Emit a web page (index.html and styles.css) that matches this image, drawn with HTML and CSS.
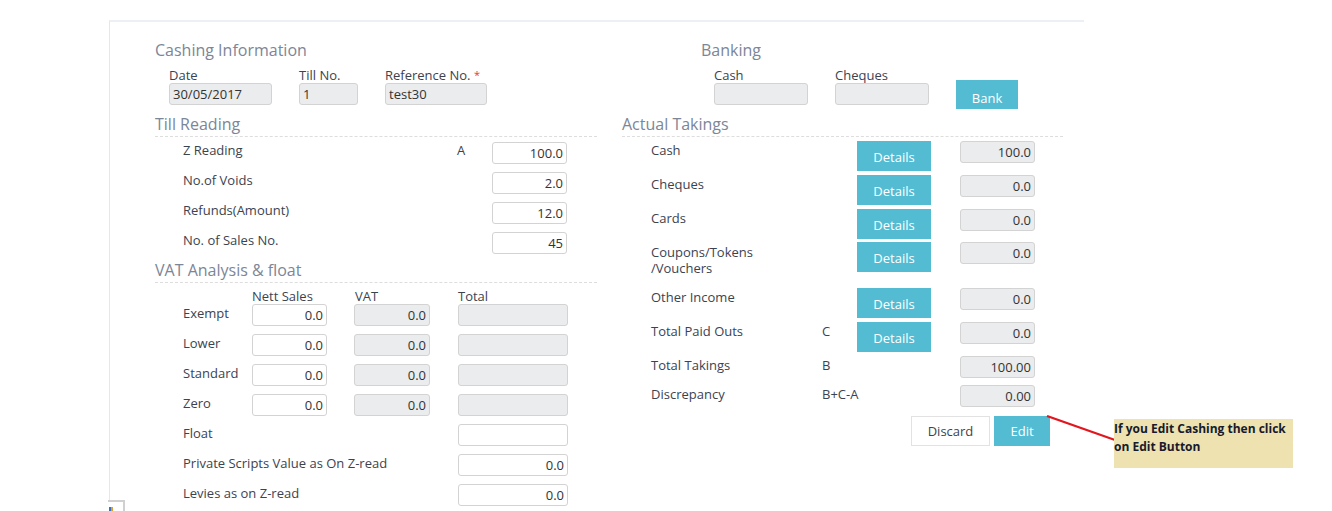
FILE: index.html
```html
<!DOCTYPE html>
<html>
<head>
<meta charset="utf-8">
<link rel="stylesheet" href="styles.css">
</head>
<body>
<div class="panel">
  <div class="cols">
    <section class="col col-left">
      <h3 class="heading">Cashing Information</h3>
      <div class="fields fields-cash">
        <div class="field w-date"><span class="lbl">Date</span><div class="inp ro">30/05/2017</div></div>
        <div class="field w-till"><span class="lbl">Till No.</span><div class="inp ro">1</div></div>
        <div class="field w-ref"><span class="lbl">Reference No. <span class="req">*</span></span><div class="inp ro">test30</div></div>
      </div>

      <h3 class="heading dashed">Till Reading</h3>
      <div class="till-rows">
        <div class="till-row"><span class="lbl">Z Reading</span><span class="lbl">A</span><div class="inp num">100.0</div></div>
        <div class="till-row"><span class="lbl">No.of Voids</span><span></span><div class="inp num">2.0</div></div>
        <div class="till-row"><span class="lbl">Refunds(Amount)</span><span></span><div class="inp num">12.0</div></div>
        <div class="till-row"><span class="lbl">No. of Sales No.</span><span></span><div class="inp num">45</div></div>
      </div>

      <h3 class="heading dashed vat-heading">VAT Analysis &amp; float</h3>
      <div class="vat-head">
        <span></span><span class="lbl">Nett Sales</span><span class="lbl vat-h">VAT</span><span class="lbl">Total</span>
      </div>
      <div class="vat-grid">
        <span class="lbl">Exempt</span><div class="inp num w-nett">0.0</div><div class="inp num ro w-vat">0.0</div><div class="inp ro w-total"></div>
        <span class="lbl">Lower</span><div class="inp num w-nett">0.0</div><div class="inp num ro w-vat">0.0</div><div class="inp ro w-total"></div>
        <span class="lbl">Standard</span><div class="inp num w-nett">0.0</div><div class="inp num ro w-vat">0.0</div><div class="inp ro w-total"></div>
        <span class="lbl">Zero</span><div class="inp num w-nett">0.0</div><div class="inp num ro w-vat">0.0</div><div class="inp ro w-total"></div>

        <span class="lbl span3">Float</span><div class="inp w-total"></div>
        <span class="lbl span3">Private Scripts Value as On Z-read</span><div class="inp num w-total">0.0</div>
        <span class="lbl span3">Levies as on Z-read</span><div class="inp num w-total">0.0</div>
      </div>
    </section>

    <section class="col col-right">
      <div class="banking">
        <h3 class="heading">Banking</h3>
        <div class="fields fields-bank">
          <div class="field w-bank"><span class="lbl">Cash</span><div class="inp ro"></div></div>
          <div class="field w-bank"><span class="lbl">Cheques</span><div class="inp ro"></div></div>
          <button class="btn btn-bank">Bank</button>
        </div>
      </div>

      <h3 class="heading dashed">Actual Takings</h3>
      <div class="take-rows">
        <div class="take-row"><span class="lbl">Cash</span><span></span><button class="btn btn-det">Details</button><div class="inp num ro">100.0</div></div>
        <div class="take-row"><span class="lbl">Cheques</span><span></span><button class="btn btn-det">Details</button><div class="inp num ro">0.0</div></div>
        <div class="take-row short"><span class="lbl">Cards</span><span></span><button class="btn btn-det">Details</button><div class="inp num ro">0.0</div></div>
        <div class="take-row tall"><span class="lbl">Coupons/Tokens<br>/Vouchers</span><span></span><button class="btn btn-det">Details</button><div class="inp num ro">0.0</div></div>
        <div class="take-row"><span class="lbl">Other Income</span><span></span><button class="btn btn-det">Details</button><div class="inp num ro">0.0</div></div>
        <div class="take-row"><span class="lbl">Total Paid Outs</span><span class="lbl">C</span><button class="btn btn-det">Details</button><div class="inp num ro">0.0</div></div>
        <div class="take-row plain"><span class="lbl">Total Takings</span><span class="lbl">B</span><span></span><div class="inp num ro">100.00</div></div>
        <div class="take-row plain"><span class="lbl">Discrepancy</span><span class="lbl">B+C-A</span><span></span><div class="inp num ro">0.00</div></div>
      </div>
      <div class="actions">
        <button class="btn btn-discard">Discard</button>
        <button class="btn btn-edit">Edit</button>
      </div>
    </section>
  </div>
</div>

<svg class="callout-line" width="80" height="30" viewBox="0 0 80 30">
  <line x1="2" y1="1" x2="70" y2="25" stroke="#e3161e" stroke-width="2.2"/>
</svg>
<div class="note">If you Edit Cashing then click on Edit Button</div>
<div class="corner"><span class="corner-icon"></span></div>
</body>
</html>
```

FILE: styles.css
```css
* { box-sizing: border-box; }
html, body { margin: 0; padding: 0; background: #fff; }
body {
  font-family: "Open Sans", "Noto Sans", sans-serif;
  font-size: 13px;
  color: #3b4350;
  width: 1332px;
  height: 511px;
  overflow: hidden;
  position: relative;
}
.panel {
  margin: 20px 0 0 109px;
  width: 975px;
  height: 481px;
  border-top: 2px solid #eceff3;
  border-left: 1px solid #e4e7eb;
  padding: 18px 0 0 45px;
}
.cols {
  display: grid;
  grid-template-columns: 442px 441px;
  column-gap: 25px;
  align-items: start;
}
.heading {
  margin: 0;
  font-weight: 400;
  font-size: 16px;
  line-height: 20px;
  color: #7b8698;
}
.heading.dashed {
  margin-top: 9px;
  padding-bottom: 2px;
  border-bottom: 1px dashed #dddddd;
}
.lbl { line-height: 16px; white-space: nowrap; }
.req { color: #e23b3b; font-size: 11px; vertical-align: top; }

.fields { display: flex; margin-top: 7px; column-gap: 27px; height: 38px; }
.fields-cash { padding-left: 14px; }
.field { display: flex; flex-direction: column; }
.w-date { width: 103px; }
.w-till { width: 59px; }
.w-ref { width: 102px; }
.w-bank { width: 94px; }

.inp {
  height: 22px;
  border: 1px solid #d3d3d3;
  border-radius: 3px;
  background: #fff;
  padding: 0 3px;
  line-height: 20px;
  color: #333;
  white-space: nowrap;
  overflow: hidden;
}
.inp.ro { background: #ebeced; }
.inp.num { text-align: right; }

.till-rows {
  margin-top: 5px;
  padding-left: 28px;
  display: flex;
  flex-direction: column;
  row-gap: 8px;
}
.till-row {
  display: grid;
  grid-template-columns: 274px 35px 75px;
  align-items: start;
  height: 22px;
}

.heading.vat-heading { margin-top: 6px; }
.vat-head {
  margin-top: 5px;
  padding-left: 28px;
  display: grid;
  grid-template-columns: 69px 102px 104px 110px;
  height: 16px;
}
.vat-head .vat-h { padding-left: 1px; }
.vat-grid {
  padding-left: 28px;
  display: grid;
  grid-template-columns: 69px 102px 104px 110px;
  grid-auto-rows: 22px;
  row-gap: 8px;
  align-items: start;
}
.vat-grid > .lbl { padding-top: 1px; }
.w-nett { width: 75px; }
.w-vat { width: 76px; }
.w-total { width: 110px; }
.span3 { grid-column: 1 / span 3; }

.banking { padding-left: 79px; }
.fields-bank { padding-left: 13px; align-items: flex-start; }

.btn {
  font-family: inherit;
  font-size: 13px;
  border: none;
  border-radius: 0;
  background: #53bcd3;
  color: #fff;
  padding: 0;
  margin: 0;
}
.btn-bank {
  width: 62px;
  height: 29px;
  margin-top: 13px;
  padding-top: 7px;
}

.take-rows { margin-top: 4px; padding-left: 29px; }
.take-row {
  display: grid;
  grid-template-columns: 171px 35px 103px 75px;
  align-items: start;
  height: 34px;
}
.take-row.short { height: 33px; }
.take-row.tall { height: 46px; }
.take-row.plain { height: 29px; }
.take-row .lbl { padding-top: 1px; }
.take-row.tall .lbl { padding-top: 2px; }
.btn-det {
  width: 74px;
  height: 30px;
  padding-top: 2px;
}

.actions {
  display: flex;
  justify-content: flex-end;
  column-gap: 4px;
  margin-top: 2px;
  padding-right: 13px;
}
.btn-discard {
  width: 79px;
  height: 30px;
  background: #fff;
  color: #3b4350;
  border: 1px solid #e2e2e2;
}
.btn-edit {
  width: 56px;
  height: 30px;
}

.callout-line {
  position: absolute;
  left: 1045px;
  top: 415px;
}
.note {
  position: absolute;
  left: 1114px;
  top: 419px;
  width: 179px;
  height: 49px;
  background: #eee2b0;
  font-family: "Open Sans", sans-serif;
  font-weight: 700;
  font-size: 12px;
  line-height: 18px;
  color: #161a2c;
  padding-top: 1px;
}
.corner {
  position: absolute;
  left: 108px;
  top: 500px;
  width: 17px;
  height: 11px;
  border-top: 2px solid #d0d0d0;
  border-right: 2px solid #d0d0d0;
}
.corner-icon {
  position: absolute;
  left: 1px;
  top: 5px;
  width: 4px;
  height: 4px;
  background: linear-gradient(90deg, #3a6fc4 50%, #e0a030 50%);
}
```
